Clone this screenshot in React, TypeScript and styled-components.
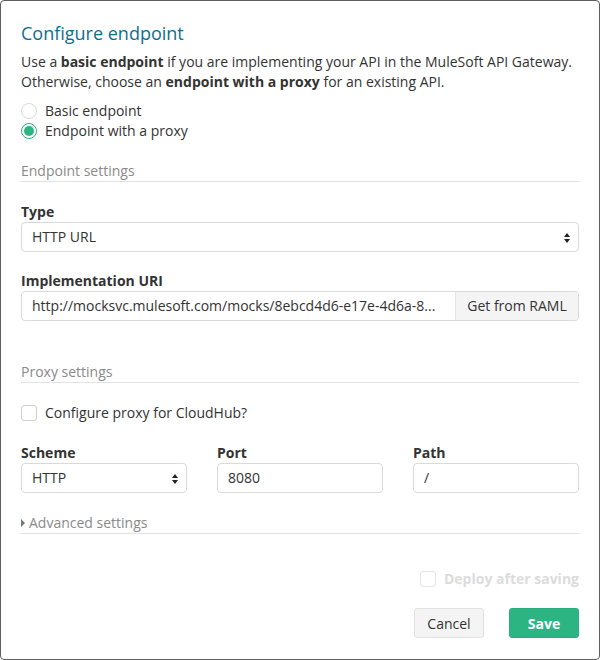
import React from "react";
import styled, { createGlobalStyle } from "styled-components";

const GlobalStyle = createGlobalStyle`
  html, body {
    margin: 0;
    padding: 0;
    background: #ffffff;
  }
  * { box-sizing: border-box; }
  body {
    font-family: "Open Sans", "Liberation Sans", Arial, sans-serif;
    font-size: 14px;
    line-height: 20px;
    color: #333333;
  }
`;

const Dialog = styled.div`
  width: 600px;
  height: 660px;
  border: 1px solid #5e5e5e;
  border-radius: 4px;
  background: #ffffff;
  padding: 20px 20px 20px 20px;
  display: flex;
  flex-direction: column;
`;

const Title = styled.h2`
  margin: 0 0 7px 0;
  font-size: 18px;
  line-height: 24px;
  font-weight: 400;
  color: #0e6e8e;
`;

const Intro = styled.p`
  margin: 0;
  b { font-weight: 700; }
`;

const OptionGroup = styled.div<{ $mt?: number }>`
  margin-top: ${p => p.$mt ?? 0}px;
  display: flex;
  flex-direction: column;
`;

const OptionRow = styled.label<{ $disabled?: boolean }>`
  display: flex;
  align-items: center;
  gap: 8px;
  height: 20px;
  color: ${p => (p.$disabled ? "#dcdcdc" : "#333333")};
  font-weight: ${p => (p.$disabled ? 700 : 400)};
`;

const Radio = styled.span<{ $checked?: boolean }>`
  width: 16px;
  height: 16px;
  border-radius: 50%;
  border: 1px solid ${p => (p.$checked ? "#2cb582" : "#dadada")};
  background: #ffffff;
  display: flex;
  align-items: center;
  justify-content: center;
  &::after {
    content: "";
    width: 10px;
    height: 10px;
    border-radius: 50%;
    background: ${p => (p.$checked ? "#2cb582" : "transparent")};
  }
`;

const Checkbox = styled.span<{ $disabled?: boolean }>`
  width: 16px;
  height: 16px;
  border-radius: 3px;
  border: 1px solid ${p => (p.$disabled ? "#e6e6e6" : "#d0d0d0")};
  background: #ffffff;
`;

const SectionHeading = styled.div<{ $mt: number }>`
  margin-top: ${p => p.$mt}px;
  height: 21px;
  color: #8a8a8a;
  border-bottom: 1px solid #e3e3e3;
  display: flex;
  align-items: center;
  gap: 4px;
`;

const Field = styled.div<{ $mt: number }>`
  margin-top: ${p => p.$mt}px;
  display: flex;
  flex-direction: column;
`;

const Label = styled.div`
  font-weight: 700;
  height: 20px;
`;

const Control = styled.div`
  position: relative;
  height: 30px;
  border: 1px solid #d9d9d9;
  border-radius: 4px;
  background: #ffffff;
  display: flex;
  align-items: center;
  padding: 0 10px;
  white-space: nowrap;
  overflow: hidden;
`;

const Arrows = styled.svg`
  position: absolute;
  right: 7px;
  top: 9px;
`;

const InputGroup = styled.div`
  display: flex;
  height: 30px;
  border: 1px solid #d9d9d9;
  border-radius: 4px;
  overflow: hidden;
`;

const GroupText = styled.div`
  flex: 1;
  display: flex;
  align-items: center;
  padding: 0 10px;
  white-space: nowrap;
  overflow: hidden;
`;

const GroupButton = styled.div`
  width: 123px;
  background: #f4f4f4;
  border-left: 1px solid #e4e4e4;
  display: flex;
  align-items: center;
  justify-content: center;
`;

const Columns = styled.div`
  margin-top: 20px;
  display: grid;
  grid-template-columns: repeat(3, 1fr);
  column-gap: 30px;
`;

const Caret = styled.span`
  width: 0;
  height: 0;
  border-top: 4px solid transparent;
  border-bottom: 4px solid transparent;
  border-left: 4px solid #777777;
`;

const DeployRow = styled.div`
  margin-top: 35px;
  display: flex;
  justify-content: flex-end;
`;

const Footer = styled.div`
  margin-top: 19px;
  display: flex;
  justify-content: flex-end;
  gap: 25px;
`;

const Button = styled.button<{ $primary?: boolean }>`
  width: 70px;
  height: 30px;
  border-radius: 3px;
  font-family: inherit;
  font-size: 14px;
  font-weight: ${p => (p.$primary ? 700 : 400)};
  color: ${p => (p.$primary ? "#ffffff" : "#333333")};
  background: ${p => (p.$primary ? "#2cb582" : "#f4f4f4")};
  border: 1px solid ${p => (p.$primary ? "#2aad7c" : "#e2e2e2")};
  padding: 0;
`;

const SelectArrows = () => (
  <Arrows width="8" height="12" viewBox="0 0 8 12">
    <path d="M4 1 L7 5 L1 5 Z" fill="#222" />
    <path d="M4 11 L7 7 L1 7 Z" fill="#222" />
  </Arrows>
);

export default function App() {
  return (
    <>
      <GlobalStyle />
      <Dialog>
        <Title>Configure endpoint</Title>
        <Intro>
          Use a <b>basic endpoint</b> if you are implementing your API in the MuleSoft API Gateway.
          Otherwise, choose an <b>endpoint with a proxy</b> for an existing API.
        </Intro>
        <OptionGroup $mt={9}>
          <OptionRow><Radio />Basic endpoint</OptionRow>
          <OptionRow><Radio $checked />Endpoint with a proxy</OptionRow>
        </OptionGroup>

        <SectionHeading $mt={20}>Endpoint settings</SectionHeading>
        <Field $mt={20}>
          <Label>Type</Label>
          <Control>HTTP URL<SelectArrows /></Control>
        </Field>
        <Field $mt={19}>
          <Label>Implementation URI</Label>
          <InputGroup>
            <GroupText>http://mocksvc.mulesoft.com/mocks/8ebcd4d6-e17e-4d6a-8...</GroupText>
            <GroupButton>Get from RAML</GroupButton>
          </InputGroup>
        </Field>

        <SectionHeading $mt={41}>Proxy settings</SectionHeading>
        <OptionGroup $mt={20}>
          <OptionRow><Checkbox />Configure proxy for CloudHub?</OptionRow>
        </OptionGroup>
        <Columns>
          <Field $mt={0}>
            <Label>Scheme</Label>
            <Control>HTTP<SelectArrows /></Control>
          </Field>
          <Field $mt={0}>
            <Label>Port</Label>
            <Control>8080</Control>
          </Field>
          <Field $mt={0}>
            <Label>Path</Label>
            <Control>/</Control>
          </Field>
        </Columns>
        <SectionHeading $mt={20}><Caret />Advanced settings</SectionHeading>

        <DeployRow>
          <OptionRow $disabled><Checkbox $disabled />Deploy after saving</OptionRow>
        </DeployRow>
        <Footer>
          <Button>Cancel</Button>
          <Button $primary>Save</Button>
        </Footer>
      </Dialog>
    </>
  );
}
